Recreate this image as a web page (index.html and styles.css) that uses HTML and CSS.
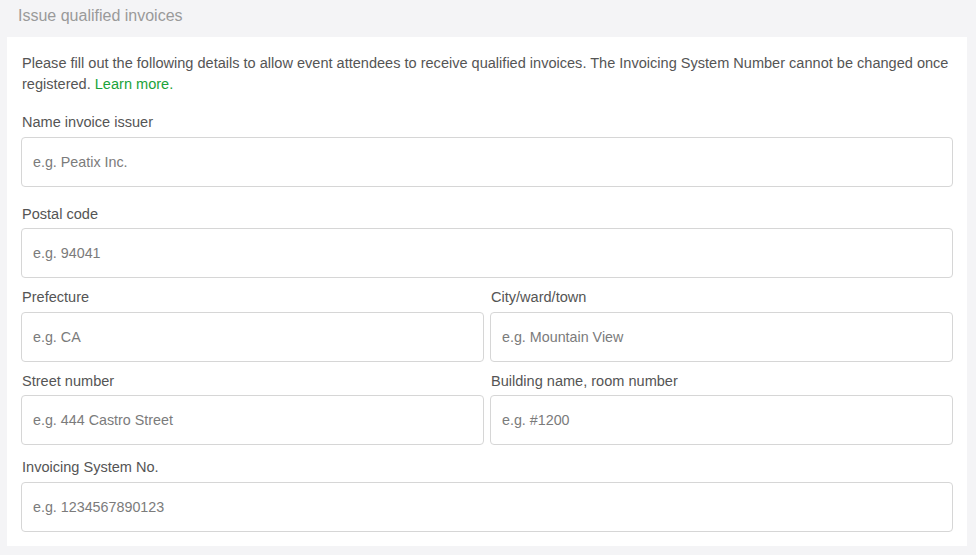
FILE: index.html
```html
<!DOCTYPE html>
<html lang="en">
<head>
<meta charset="utf-8">
<title>Issue qualified invoices</title>
<link rel="stylesheet" href="styles.css">
</head>
<body>
<div class="page">
  <h2 class="section-title">Issue qualified invoices</h2>
  <div class="panel">
    <p class="intro">Please fill out the following details to allow event attendees to receive qualified invoices. The Invoicing System Number cannot be changed once registered. <a href="#" class="link">Learn more.</a></p>

    <div class="field field-first">
      <label class="label">Name invoice issuer</label>
      <input class="input" type="text" placeholder="e.g. Peatix Inc.">
    </div>

    <div class="field field-postal">
      <label class="label">Postal code</label>
      <input class="input" type="text" placeholder="e.g. 94041">
    </div>

    <div class="row row-a">
      <div class="field">
        <label class="label">Prefecture</label>
        <input class="input" type="text" placeholder="e.g. CA">
      </div>
      <div class="field">
        <label class="label">City/ward/town</label>
        <input class="input" type="text" placeholder="e.g. Mountain View">
      </div>
    </div>

    <div class="row row-b">
      <div class="field">
        <label class="label">Street number</label>
        <input class="input" type="text" placeholder="e.g. 444 Castro Street">
      </div>
      <div class="field">
        <label class="label">Building name, room number</label>
        <input class="input" type="text" placeholder="e.g. #1200">
      </div>
    </div>

    <div class="field field-last">
      <label class="label">Invoicing System No.</label>
      <input class="input" type="text" placeholder="e.g. 1234567890123">
    </div>
  </div>
</div>
</body>
</html>
```
FILE: styles.css
```css
* { box-sizing: border-box; }
html, body { margin: 0; padding: 0; }
body {
  background: #f4f4f6;
  font-family: "Liberation Sans", Arial, Helvetica, sans-serif;
  color: #555;
  width: 976px;
  height: 555px;
  overflow: hidden;
}
.page {
  padding: 0 9px 0 7px;
}
.section-title {
  margin: 0;
  height: 37px;
  padding: 6px 0 0 11px;
  font-size: 16px;
  font-weight: normal;
  line-height: 20px;
  color: #9a9a9a;
}
.panel {
  background: #fff;
  padding: 16px 14px 14px 14px;
}
.intro {
  margin: 0;
  padding-left: 1px;
  font-size: 14.55px;
  line-height: 21px;
  color: #555;
}
.link {
  color: #1aa33a;
  text-decoration: none;
}
.field {
  display: flex;
  flex-direction: column;
  min-width: 0;
}
.label {
  display: block;
  padding-left: 1px;
  font-size: 14.55px;
  line-height: 20px;
  color: #555;
  margin-bottom: 5px;
}
.input {
  display: block;
  width: 100%;
  height: 50px;
  border: 1px solid #d6d6d6;
  border-radius: 4px;
  padding: 0 11px;
  font-family: "Liberation Sans", Arial, Helvetica, sans-serif;
  font-size: 14.3px;
  color: #555;
  background: #fff;
  outline: none;
}
.input::placeholder { color: #7b7b7b; }
.field-first { margin-top: 17px; }
.field-postal { margin-top: 17px; }
.field-postal .label { margin-bottom: 4px; }
.row {
  display: grid;
  grid-template-columns: 1fr 1fr;
  column-gap: 6px;
}
.row-a { margin-top: 9px; }
.row-b { margin-top: 9px; }
.row-b .label { margin-bottom: 4px; }
.field-last { margin-top: 12px; }
```
